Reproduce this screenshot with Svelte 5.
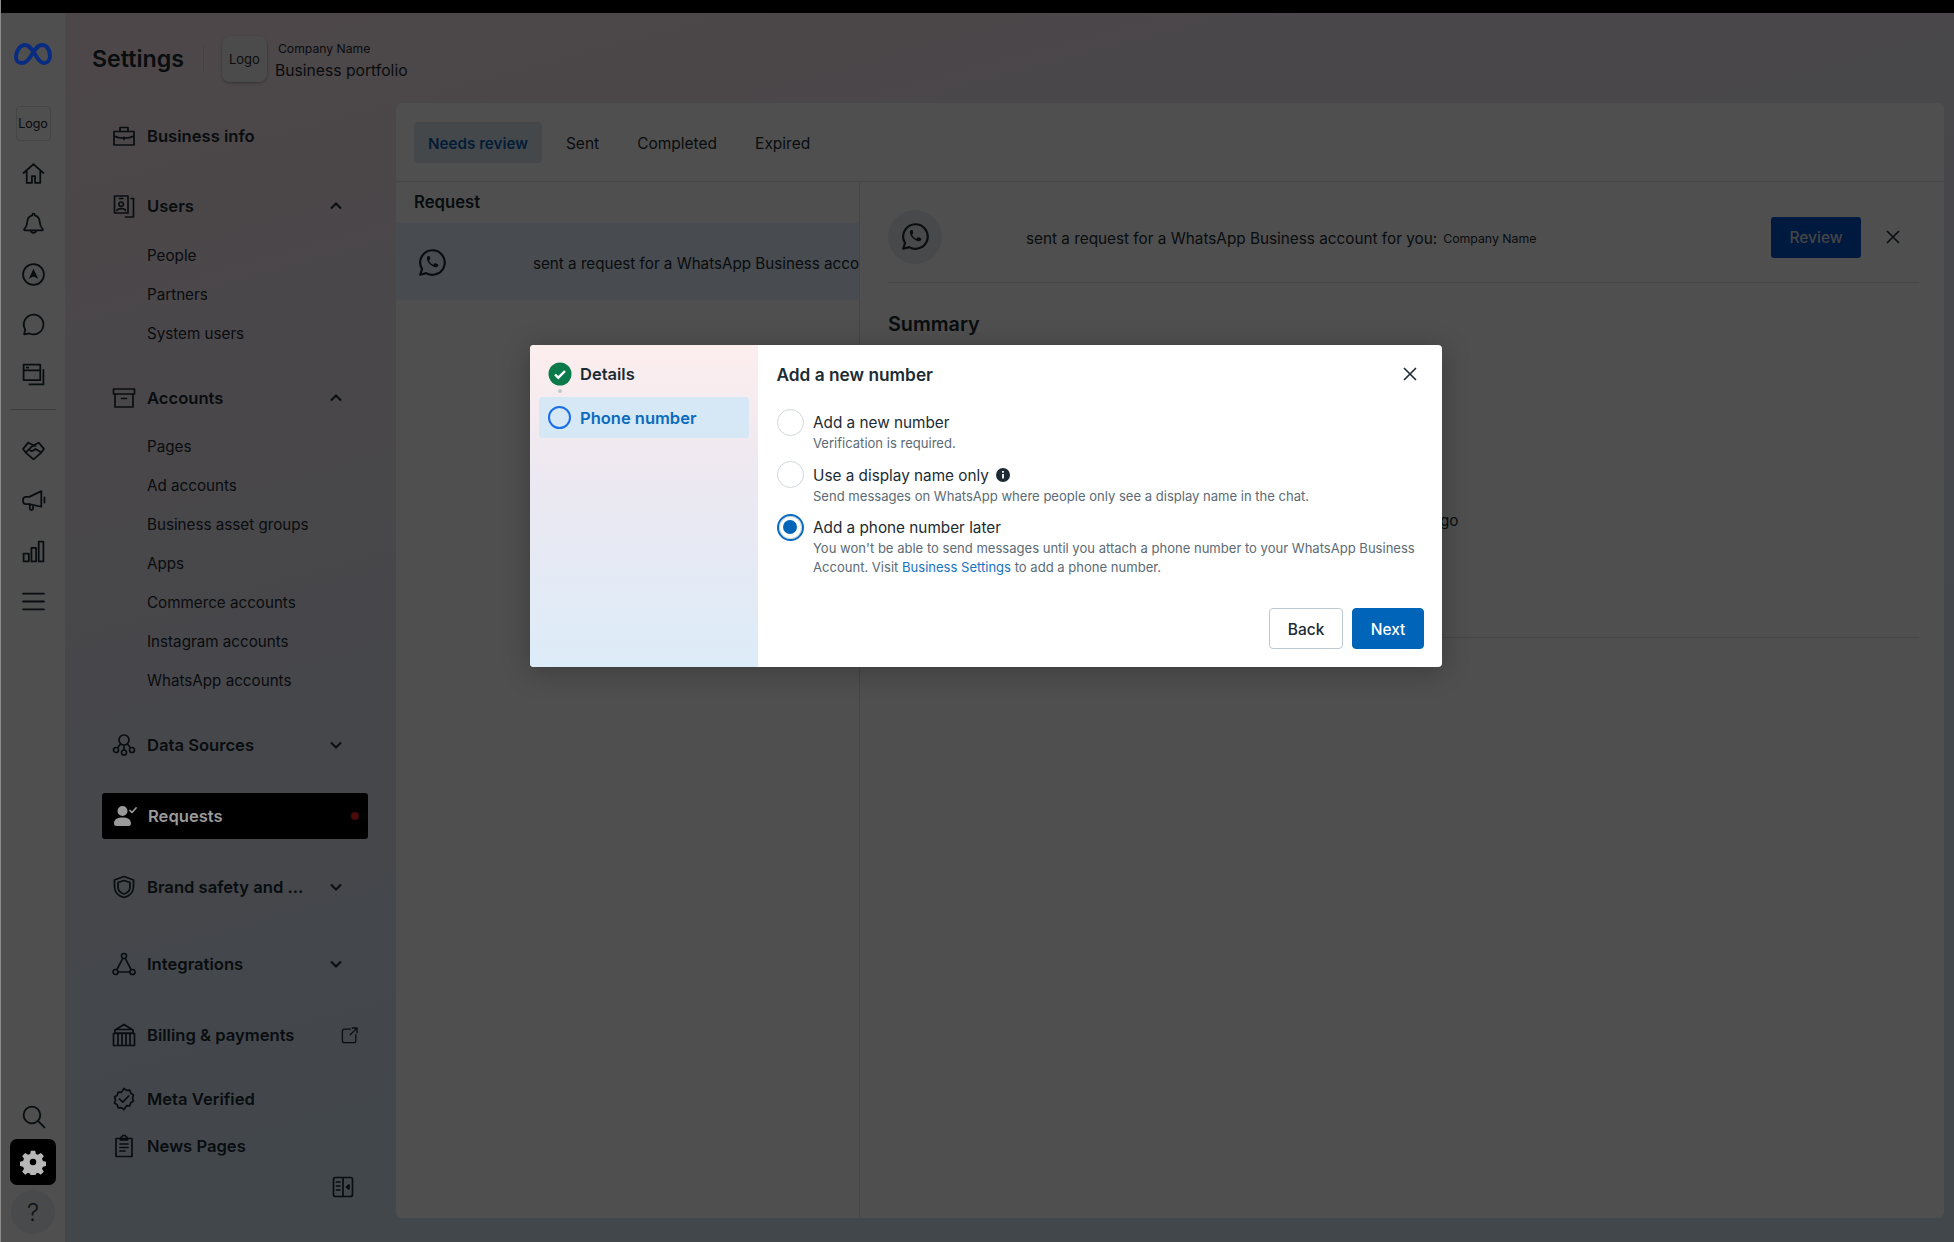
<script>
  const icons = {
    home: "M2.500 11.500 12 3l9.500 8.500M5.500 9.500V21h5v-6.500h3V21h5V9.500",
    bell: "M12 2.500c.7 0 1.200.5 1.200 1.200v.6c3 .7 4.600 3 4.800 6.200.2 3.500 1 5 2.800 6.800.4.500.2 1.200-.5 1.200H3.700c-.7 0-.9-.7-.5-1.200C5 15.500 5.800 14 6 10.500c.2-3.200 1.800-5.500 4.800-6.200v-.6c0-.7.5-1.200 1.200-1.200zM9.500 18.500a2.500 2.500 0 0 0 5 0",
    chat: "M12 2.500a9.500 9.500 0 1 1-4 18.100L3 21.500l1-4.700A9.500 9.500 0 0 1 12 2.500z",
    pages: "M2.500 2.500h16v15h-16zM2.500 8h16M5.500 5.300h1.500M21.500 7.500v14H8",
    deal: "M7 4.500 2 10.500l2.500 3.500L12 20.500l7.500-6.500 2.500-3.500L17 4.500 12 7zM7 4.500 12 7M4.500 14 10 8.500c1-1 2.500-1.500 4-1M9 12c2 1.500 4-.5 5-1.500l5.500 3.500",
    horn: "M19.500 3v15L8 15.500H4.500c-1.500 0-2.500-1-2.500-2.500v-2c0-1.500 1-2.500 2.500-2.500H8L19.500 3zM8.500 15.500V20c0 1.500 3 1.500 3 0v-3.500M22.500 9v5",
    bars: "M2.500 14h5v7.500h-5zM10 8.500h4.500v13H10zM17 2.500h4.500v19H17z",
    menu: "M2 4.500h20M2 12h20M2 19.500h20",
    search: "M10.500 2.500a8 8 0 1 1 0 16 8 8 0 0 1 0-16zM16.500 16.500l6 6",
    brief: "M2 7.500h20V21H2zM8 7.500V3.500h8v4M2 12c5 3 15 3 20 0M12 13v2.500",
    users: "M2.500 2h13.500v17H2.500zM7.500 4.500h3.500M9.200 8a2.200 2.200 0 1 1 0 4.400 2.200 2.200 0 0 1 0-4.400zM5 16.500c.5-2.500 8-2.500 8.500 0M19 4.500h2.500v18.500h-8",
    box: "M1.500 3h21v5h-21zM3 8v13h18V8M9.500 12.500h5",
    nodes: "M12 2a5 5 0 1 1 0 10 5 5 0 0 1 0-10zM4 14.500a2.500 2.500 0 1 1 0 5 2.500 2.500 0 0 1 0-5zM20 14.500a2.500 2.500 0 1 1 0 5 2.500 2.500 0 0 1 0-5zM12 17a2.500 2.500 0 1 1 0 5 2.500 2.500 0 0 1 0-5zM12 12v5M8.500 11 5.500 15M15.500 11l3 4",
    shield: "M12 1.500 21.500 5v7c0 5-4 9-9.500 10.500C6.500 21 2.500 17 2.500 12V5L12 1.500zM12 5.500 18 7.500v4.500c0 3.500-2.500 6-6 7-3.500-1-6-3.500-6-7V7.500l6-2z",
    graph: "M12 1.500a2.500 2.500 0 1 1 0 5 2.500 2.500 0 0 1 0-5zM3.500 17.500a2.500 2.500 0 1 1 0 5 2.500 2.500 0 0 1 0-5zM20.500 17.500a2.500 2.500 0 1 1 0 5 2.500 2.500 0 0 1 0-5zM10.800 6.300 4.700 17.800M13.200 6.300l6.100 11.500M6 20h12",
    bank: "M12 1.500 21 7v3H3V7l9-5.500zM1.500 10.500h21v12h-21zM6 10.500v12M10 10.500v12M14 10.500v12M18 10.500v12M5 6.500h14",
    badge: "M12 1.500l2.600 1.900 3.200-.2 1 3 2.700 1.800-1 3 1 3-2.700 1.800-1 3-3.200-.2L12 22.500l-2.600-1.900-3.200.2-1-3L2.500 16l1-3-1-3 2.700-1.800 1-3 3.200.2L12 1.500zM7.500 12l3.200 3.200 6-6.200",
    clip: "M4 4.500h16v18H4zM8.500 4.500c0-1.500 2-1.500 2.200-3h2.600c.2 1.500 2.200 1.500 2.200 3v1.500h-7zM8 10h8M8 13.500h8M8 17h5",
    ext: "M13 4H5.500C4 4 3 5 3 6.500v12C3 20 4 21 5.500 21h12c1.500 0 2.500-1 2.500-2.500V11M13 11l8-8M15.500 2.500h6v6",
    side: "M4.500 2.500h15c1.500 0 2 .8 2 2v15c0 1.200-.5 2-2 2h-15c-1.500 0-2-.8-2-2v-15c0-1.200.5-2 2-2zM12 2.500v19M5.500 7H9M5.500 11H9M5.500 15H9M18 10v4l-2.500-2z",
    whatsapp: "M12 2.500a9.500 9.500 0 0 0-8.100 14.500L2.500 21.500l4.700-1.300A9.500 9.500 0 1 0 12 2.500z"
  };

  const phone = "M8.900 7c-.5 0-1.100.5-1.200 1.400-.2 1.500.6 3.300 2.100 4.800 1.600 1.600 3.300 2.600 4.800 2.500 1.100 0 2-.9 2-1.700 0-.3-.1-.4-.3-.5l-2-1c-.3-.2-.5-.1-.7.1l-.7.9c-.2.2-.4.2-.7.1-1.100-.5-2.200-1.500-2.800-2.700-.1-.2-.1-.4.1-.6l.6-.7c.2-.2.2-.4.1-.7L9.900 7.400C9.700 7.100 9.400 7 8.900 7z";

  const railTop = ["home", "bell", "nav", "chat", "pages"];
  const railMid = ["deal", "horn", "bars", "menu"];

  const nav = [
    { label: "Business info", icon: "brief", gap: 0 },
    { label: "Users", icon: "users", chevron: "up", gap: 44, kids: ["People", "Partners", "System users"] },
    { label: "Accounts", icon: "box", chevron: "up", gap: 48, kids: ["Pages", "Ad accounts", "Business asset groups", "Apps", "Commerce accounts", "Instagram accounts", "WhatsApp accounts"] },
    { label: "Data Sources", icon: "nodes", chevron: "down", gap: 48 },
    { label: "Requests", icon: "person", active: true, gap: 45 },
    { label: "Brand safety and ...", icon: "shield", chevron: "down", gap: 45 },
    { label: "Integrations", icon: "graph", chevron: "down", gap: 51 },
    { label: "Billing & payments", icon: "bank", ext: true, gap: 45 },
    { label: "Meta Verified", icon: "badge", gap: 38 },
    { label: "News Pages", icon: "clip", gap: 21 }
  ];

  const tabs = ["Needs review", "Sent", "Completed", "Expired"];
</script>

{#snippet icon(name, size = 24)}
  <svg class="icon" width={size} height={size} viewBox="0 0 24 24">
    {#if name === "nav"}
      <circle cx="12" cy="12" r="10" />
      <path class="solid" d="M12 6.500 16.500 16 12 14 7.500 16z" />
    {:else if name === "person"}
      <path class="solid" d="M9.500 2a5 5 0 1 1 0 10 5 5 0 0 1 0-10zM1 19.500C1 15 5 13.500 9.500 13.500S18 15 18 19.500c0 1.700-1 2.500-2.500 2.500h-12C2 22 1 21.200 1 19.500z" />
      <path d="M17 6.500l2 2 4-4.500" />
    {:else if name === "whatsapp"}
      <path d={icons.whatsapp} />
      <path class="solid" d={phone} />
    {:else}
      <path d={icons[name]} />
    {/if}
  </svg>
{/snippet}

<div class="shell">
  <div class="topbar"></div>
  <div class="body">
    <aside class="rail">
      <svg class="meta" width="40" height="26" viewBox="0 0 40 26">
        <path d="M3 16C3 9 7 3 12 3c5 0 8 6 11 11 2.500 4 5 7 8 7 3.500 0 6-3 6-7 0-6-3-11-8-11-5 0-8 6-11 11-2.500 4-5 7-9 7-3 0-6-2-6-5z" />
      </svg>
      <div class="rail-logo">Logo</div>
      <div class="rail-group">
        {#each railTop as name}
          <div class="rail-item">{@render icon(name, 25)}</div>
        {/each}
      </div>
      <div class="rail-line"></div>
      <div class="rail-group">
        {#each railMid as name}
          <div class="rail-item">{@render icon(name, 25)}</div>
        {/each}
      </div>
      <div class="rail-foot">
        <div class="rail-item">{@render icon("search", 25)}</div>
        <div class="rail-settings">
          <svg width="26" height="26" viewBox="0 0 24 24">
            <path fill="#b8b8b8" fill-rule="evenodd" d="M10 1.500h4l.6 3 2 .9 2.600-1.700 2.800 2.800-1.700 2.600.9 2 3 .6v4l-3 .6-.9 2 1.700 2.600-2.800 2.800-2.600-1.700-2 .9-.6 3h-4l-.6-3-2-.9-2.600 1.700-2.800-2.800 1.700-2.600-.9-2-3-.6v-4l3-.6.9-2-1.700-2.600 2.800-2.800 2.600 1.700 2-.9zM12 9a3 3 0 1 0 0 6 3 3 0 0 0 0-6z" />
          </svg>
        </div>
        <div class="rail-help">?</div>
      </div>
    </aside>

    <div class="content">
      <header class="head">
        <h1>Settings</h1>
        <span class="head-line"></span>
        <div class="head-logo">Logo</div>
        <div class="head-names">
          <span class="company">Company Name</span>
          <span class="portfolio">Business portfolio</span>
        </div>
      </header>

      <div class="columns">
        <nav class="side">
          {#each nav as item}
            <div class="group" style="margin-top: {item.gap}px">
              <div class="item" class:active={item.active}>
                <span class="item-icon">{@render icon(item.icon, 24)}</span>
                <span class="item-label">{item.label}</span>
                {#if item.chevron}
                  <svg class="chev" class:down={item.chevron === "down"} width="14" height="14" viewBox="0 0 14 14">
                    <path d="M2 9.500 7 4.500l5 5" />
                  </svg>
                {/if}
                {#if item.ext}
                  <span class="ext">{@render icon("ext", 19)}</span>
                {/if}
                {#if item.active}
                  <span class="dot"></span>
                {/if}
              </div>
              {#if item.kids}
                <div class="kids">
                  {#each item.kids as kid}
                    <div class="kid">{kid}</div>
                  {/each}
                </div>
              {/if}
            </div>
          {/each}
          <div class="collapse">
            {@render icon("side", 24)}
          </div>
        </nav>

        <main class="panel">
          <div class="tabs">
            {#each tabs as tab, i}
              <span class="tab" class:current={i === 0}>{tab}</span>
            {/each}
          </div>
          <div class="split">
            <section class="list">
              <div class="list-title">Request</div>
              <div class="list-row">
                <span class="row-icon">{@render icon("whatsapp", 31)}</span>
                <span class="row-text">sent a request for a WhatsApp Business account for you</span>
              </div>
            </section>
            <section class="detail">
              <div class="detail-top">
                <span class="avatar">{@render icon("whatsapp", 31)}</span>
                <span class="detail-text">sent a request for a WhatsApp Business account for you:</span>
                <span class="detail-company">Company Name</span>
                <span class="review">Review</span>
                <svg class="x" width="16" height="16" viewBox="0 0 16 16"><path d="M2 2l12 12M14 2 2 14" /></svg>
              </div>
              <h2>Summary</h2>
              <div class="detail-ago">2 days ago</div>
              <div class="detail-rule"></div>
            </section>
          </div>
        </main>
      </div>
    </div>
  </div>

  <div class="scrim">
    <div class="modal">
      <div class="steps">
        <div class="step">
          <svg width="24" height="24" viewBox="0 0 24 24">
            <circle cx="12" cy="12" r="11.500" fill="#0a7a4b" />
            <path d="M7 12.500l3.300 3.200L17 9" fill="none" stroke="#fff" stroke-width="2.400" />
          </svg>
          <span>Details</span>
        </div>
        <div class="step-dot"></div>
        <div class="step now">
          <span class="step-ring"></span>
          <span>Phone number</span>
        </div>
      </div>
      <div class="form">
        <div class="form-head">
          <h3>Add a new number</h3>
          <svg class="form-x" width="16" height="16" viewBox="0 0 16 16"><path d="M2 2l12 12M14 2 2 14" /></svg>
        </div>
        <div class="option">
          <span class="radio"></span>
          <div>
            <div class="opt-label">Add a new number</div>
            <div class="opt-desc">Verification is required.</div>
          </div>
        </div>
        <div class="option">
          <span class="radio"></span>
          <div>
            <div class="opt-label">Use a display name only
              <svg class="info" width="14" height="14" viewBox="0 0 14 14">
                <circle cx="7" cy="7" r="7" fill="#1c2b33" />
                <path d="M7 6v4.500M7 3v1.800" stroke="#fff" stroke-width="1.800" />
              </svg>
            </div>
            <div class="opt-desc">Send messages on WhatsApp where people only see a display name in the chat.</div>
          </div>
        </div>
        <div class="option">
          <span class="radio on"></span>
          <div>
            <div class="opt-label">Add a phone number later</div>
            <div class="opt-desc">You won't be able to send messages until you attach a phone number to your WhatsApp Business<br />Account. Visit <span class="link">Business Settings</span> to add a phone number.</div>
          </div>
        </div>
        <div class="actions">
          <span class="btn">Back</span>
          <span class="btn primary">Next</span>
        </div>
      </div>
    </div>
  </div>
</div>

<style>
  :global(body) {
    margin: 0;
    font-family: Inter, "Liberation Sans", sans-serif;
    color: #1c2b33;
  }
  .shell {
    position: relative;
    width: 1954px;
    height: 1242px;
    overflow: hidden;
    display: flex;
    flex-direction: column;
    box-sizing: border-box;
    border-left: 1px solid #8c8c8c;
    background: #fff;
  }
  .topbar {
    height: 13px;
    background: #000;
    flex: none;
    margin-left: -1px;
  }
  .body {
    flex: 1;
    display: flex;
    min-height: 0;
  }
  .rail {
    width: 64px;
    flex: none;
    display: flex;
    flex-direction: column;
    align-items: center;
    background: #fdfdfd;
    padding-top: 29px;
    box-sizing: border-box;
    padding-bottom: 8px;
  }
  .meta {
    position: relative;
    z-index: 3;
    fill: none;
    stroke: #0a2c80;
    stroke-width: 4;
  }
  .rail-logo {
    margin-top: 38px;
    width: 35px;
    height: 35px;
    box-sizing: border-box;
    border: 1px solid #ddd;
    border-radius: 4px;
    font-size: 12.500px;
    display: flex;
    align-items: center;
    justify-content: center;
  }
  .rail-group {
    display: flex;
    flex-direction: column;
    gap: 25.300px;
    margin-top: 20px;
  }
  .rail-item {
    height: 25px;
    display: flex;
    justify-content: center;
  }
  .rail-line {
    width: 46px;
    height: 1px;
    background: #c6c6c6;
    margin-top: 22px;
    margin-bottom: 8px;
  }
  .rail-foot {
    margin-top: auto;
    display: flex;
    flex-direction: column;
    align-items: center;
  }
  .rail-settings {
    width: 46px;
    height: 46px;
    margin-top: 10px;
    background: #000;
    border-radius: 7px;
    display: flex;
    align-items: center;
    justify-content: center;
    position: relative;
    z-index: 3;
  }
  .rail-help {
    width: 44px;
    height: 44px;
    margin-top: 5px;
    border-radius: 50%;
    background: #e8eef0;
    font-size: 24px;
    font-weight: 300;
    display: flex;
    align-items: center;
    justify-content: center;
    color: #2a3a42;
  }
  .content {
    flex: 1;
    min-width: 0;
    display: flex;
    flex-direction: column;
    background: linear-gradient(165deg, #f9e6ea 0%, #d5e5f5 70%, #d5e5f5 100%);
  }
  .head {
    height: 90px;
    flex: none;
    display: flex;
    align-items: center;
    padding-left: 27px;
    padding-top: 2px;
    box-sizing: border-box;
  }
  h1 {
    margin: 0;
    font-size: 23.200px;
    font-weight: 600;
  }
  .head-line {
    width: 1px;
    height: 26px;
    background: #d8d0d4;
    margin: 0 18px 0 19px;
  }
  .head-logo {
    width: 45px;
    height: 46px;
    border-radius: 8px;
    background: #f4f2f3;
    font-size: 13px;
    display: flex;
    align-items: center;
    justify-content: center;
    box-shadow: 0 1px 3px rgba(0, 0, 0, 0.3);
  }
  .head-names {
    display: flex;
    flex-direction: column;
    margin-left: 8px;
    gap: 5px;
    padding-top: 2px;
  }
  .company {
    font-size: 12.200px;
    padding-left: 3px;
  }
  .portfolio {
    font-size: 15.700px;
  }
  .columns {
    flex: 1;
    display: flex;
    min-height: 0;
    padding: 0 10px 24px 0;
  }
  .side {
    width: 331px;
    flex: none;
    box-sizing: border-box;
    padding: 20px 28px 0 47px;
    display: flex;
    flex-direction: column;
  }
  .item {
    display: flex;
    align-items: center;
    height: 26px;
    font-size: 16.600px;
    font-weight: 600;
    gap: 10px;
    margin: 0 0 0 -1px;
    position: relative;
  }
  .item-icon {
    width: 26px;
    height: 26px;
    flex: none;
    display: flex;
    align-items: center;
    justify-content: center;
  }
  .item-label {
    flex: 1;
    white-space: nowrap;
  }
  .item.active {
    height: 46px;
    margin: -10px 0 -10px -10px;
    padding: 0 0 0 10px;
    background: #000;
    border-radius: 3px;
    color: #9a9a9a;
    position: relative;
    z-index: 3;
  }
  .item.active :global(.icon) {
    stroke: #9a9a9a;
  }
  .item.active :global(.solid) {
    fill: #9a9a9a;
    stroke: none;
  }
  .dot {
    width: 8px;
    height: 8px;
    border-radius: 50%;
    background: #4a0a0a;
    margin-right: 9px;
  }
  .chev {
    margin-right: 25px;
    fill: none;
    stroke: #1c2b33;
    stroke-width: 2;
  }
  .chev.down {
    transform: rotate(180deg);
  }
  .ext {
    display: flex;
    margin-right: 9px;
  }
  .kids {
    display: flex;
    flex-direction: column;
    margin-top: 26.500px;
    gap: 19px;
    padding-left: 35px;
    margin-bottom: -7px;
  }
  .kid {
    font-size: 15.200px;
    line-height: 20px;
  }
  .collapse {
    margin-top: auto;
    margin-bottom: 19px;
    align-self: flex-end;
    margin-right: 13px;
    display: flex;
  }
  .icon {
    fill: none;
    stroke: #1c2b33;
    stroke-width: 1.700;
    stroke-linejoin: round;
    stroke-linecap: round;
    flex: none;
  }
  .icon :global(.solid) {
    fill: #1c2b33;
    stroke: none;
  }
  .panel {
    flex: 1;
    min-width: 0;
    display: flex;
    flex-direction: column;
    background: #fff;
    border-radius: 6px;
  }
  .tabs {
    height: 79px;
    flex: none;
    box-sizing: border-box;
    border-bottom: 1px solid #dde1e4;
    display: flex;
    align-items: center;
    padding-left: 18px;
    gap: 10px;
  }
  .tab {
    font-size: 15.500px;
    padding: 3px 14px 0;
    height: 41px;
    box-sizing: border-box;
    display: flex;
    align-items: center;
    border-radius: 4px;
  }
  .tab.current {
    background: #dbe8f3;
    color: #0b5cad;
    font-weight: 600;
    font-size: 15.200px;
  }
  .split {
    flex: 1;
    display: flex;
    min-height: 0;
  }
  .list {
    width: 464px;
    flex: none;
    overflow: hidden;
    border-right: 1px solid #dde1e4;
    box-sizing: border-box;
  }
  .list-title {
    height: 41px;
    display: flex;
    align-items: center;
    padding: 0 0 2px 18px;
    box-sizing: border-box;
    font-size: 16.700px;
    font-weight: 600;
  }
  .list-row {
    height: 77px;
    display: flex;
    align-items: center;
    background: #e9f2fd;
    padding-left: 21px;
    white-space: nowrap;
  }
  .row-icon {
    display: flex;
    margin-right: 85px;
    padding-top: 2px;
  }
  .row-text {
    font-size: 15.200px;
    padding-top: 3px;
  }
  .detail {
    flex: 1;
    min-width: 0;
    padding: 0 25px 0 28px;
  }
  .detail-top {
    height: 101px;
    box-sizing: border-box;
    border-bottom: 1px solid #dde1e4;
    display: flex;
    align-items: center;
    padding-top: 9px;
  }
  .avatar {
    width: 54px;
    height: 54px;
    border-radius: 50%;
    background: #e6ecef;
    display: flex;
    align-items: center;
    justify-content: center;
    margin-right: 84px;
  }
  .detail-text {
    font-size: 15.300px;
    padding-top: 3px;
  }
  .detail-company {
    font-size: 12.300px;
    margin-left: 6px;
    padding-top: 3px;
  }
  .review {
    margin-left: auto;
    width: 90px;
    height: 41px;
    background: #0050c8;
    color: #ddd;
    border-radius: 3px;
    font-size: 15.500px;
    font-weight: 500;
    display: flex;
    align-items: center;
    justify-content: center;
    margin-top: 2px;
  }
  .x {
    margin: 0 18px 0 24px;
    fill: none;
    stroke: #1c2b33;
    stroke-width: 1.600;
  }
  h2 {
    margin: 29px 0 0;
    font-size: 19.800px;
    font-weight: 600;
  }
  .detail-ago {
    margin-top: 174.500px;
    font-size: 15.300px;
    padding-left: 491px;
    white-space: nowrap;
  }
  .detail-rule {
    margin-top: 107.500px;
    height: 1px;
    background: #dde1e4;
  }
  .scrim {
    position: absolute;
    inset: 0;
    background: rgba(0, 0, 0, 0.69);
    z-index: 2;
  }
  .modal {
    position: absolute;
    left: 529px;
    top: 345px;
    width: 912px;
    height: 322px;
    display: flex;
    border-radius: 4px;
    overflow: hidden;
    background: #fff;
    box-shadow: 0 4px 28px rgba(0, 0, 0, 0.25);
  }
  .steps {
    width: 228px;
    flex: none;
    box-sizing: border-box;
    padding: 17px 9px 0;
    background: linear-gradient(180deg, #fdeeee 0%, #ede8f1 40%, #dcecf8 100%);
  }
  .step {
    display: flex;
    align-items: center;
    gap: 9px;
    height: 24px;
    padding-left: 9px;
    font-size: 16.500px;
    font-weight: 600;
  }
  .step svg {
    margin-right: -1px;
  }
  .step-dot {
    width: 4px;
    height: 4px;
    border-radius: 50%;
    background: #c3cbd0;
    margin: 3px 0 0 19px;
  }
  .step.now {
    height: 41px;
    margin-top: 4px;
    background: #d6e7f6;
    border-radius: 4px;
    color: #0b6bbd;
  }
  .step-ring {
    width: 23px;
    height: 23px;
    border-radius: 50%;
    box-sizing: border-box;
    border: 2px solid #1c6ee8;
  }
  .form {
    flex: 1;
    position: relative;
    padding: 0 18px 0 18.500px;
    display: flex;
    flex-direction: column;
  }
  .form-head {
    height: 67px;
    display: flex;
    align-items: flex-start;
    justify-content: space-between;
    flex: none;
    padding-top: 19px;
    box-sizing: border-box;
  }
  h3 {
    margin: 0;
    font-size: 17.300px;
    font-weight: 600;
  }
  .form-x {
    fill: none;
    stroke: #1c2b33;
    stroke-width: 1.600;
    margin-right: 6px;
    margin-top: 2px;
  }
  .option {
    display: flex;
    gap: 9.500px;
    margin-bottom: 12px;
  }
  .radio {
    width: 27px;
    height: 27px;
    border-radius: 50%;
    box-sizing: border-box;
    border: 1.500px solid #ced6dc;
    flex: none;
    margin-top: -3.500px;
    position: relative;
  }
  .radio.on {
    border: 2px solid #0b6bbd;
    box-shadow: 0 0 0 1px #cfd9e0 inset;
  }
  .radio.on::after {
    content: "";
    position: absolute;
    inset: 4.500px;
    border-radius: 50%;
    background: #0064b8;
  }
  .opt-label {
    font-size: 15.300px;
    line-height: 22px;
  }
  .info {
    margin-left: 3px;
    vertical-align: -1px;
  }
  .opt-desc {
    font-size: 13.050px;
    line-height: 18.700px;
    color: #5c6b75;
    white-space: nowrap;
  }
  .link {
    color: #1773c4;
  }
  .actions {
    margin-top: auto;
    margin-bottom: 18px;
    display: flex;
    justify-content: flex-end;
    gap: 9px;
  }
  .btn {
    width: 74px;
    height: 41px;
    box-sizing: border-box;
    border: 1px solid #bcc9d3;
    border-radius: 4px;
    display: flex;
    align-items: center;
    justify-content: center;
    font-size: 15.500px;
    font-weight: 500;
    padding-top: 1px;
  }
  .btn.primary {
    width: 72px;
    background: #0064b8;
    border-color: #0064b8;
    color: #fff;
  }
</style>
